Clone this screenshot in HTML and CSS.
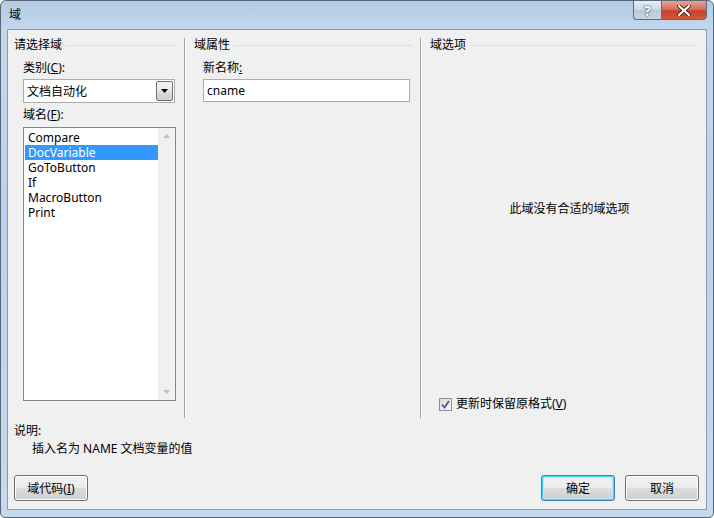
FILE: index.html
```html
<!DOCTYPE html>
<html lang="zh-CN">
<head>
    <meta charset="UTF-8">
    <title>域</title>
    <link rel="stylesheet" href="styles.css">
</head>
<body>
    <div class="window">
        <div class="titlebar">
            <span class="title">域</span>
            <div class="caption-buttons">
                <div class="cap-btn help">?</div>
                <div class="cap-btn close">
                    <svg width="14" height="11" viewBox="0 0 14 11">
                        <path d="M2 1 L12 10 M12 1 L2 10" stroke="#4a2020" stroke-width="4" stroke-linecap="round"/>
                        <path d="M2 1 L12 10 M12 1 L2 10" stroke="#fff" stroke-width="2.2" stroke-linecap="round"/>
                    </svg>
                </div>
            </div>
        </div>

        <div class="client">
            <div class="panels">
                <!-- left: choose field -->
                <div class="col col-left">
                    <div class="group-head"><span>请选择域</span><i></i></div>
                    <div class="col-body">
                        <div class="label first">类别(<u>C</u>):</div>
                        <div class="combo">
                            <span>文档自动化</span>
                            <div class="combo-btn">
                                <svg width="7" height="4" viewBox="0 0 7 4"><path d="M0 0 H7 L3.5 4 Z" fill="#000"/></svg>
                            </div>
                        </div>
                        <div class="label">域名(<u>F</u>):</div>
                        <div class="listbox">
                            <ul class="items">
                                <li>Compare</li>
                                <li class="selected">DocVariable</li>
                                <li>GoToButton</li>
                                <li>If</li>
                                <li>MacroButton</li>
                                <li>Print</li>
                            </ul>
                            <div class="scrollbar">
                                <svg width="7" height="4" viewBox="0 0 7 4"><path d="M0 4 H7 L3.5 0 Z" fill="#c0c0c0"/></svg>
                                <svg width="7" height="4" viewBox="0 0 7 4"><path d="M0 0 H7 L3.5 4 Z" fill="#c0c0c0"/></svg>
                            </div>
                        </div>
                    </div>
                </div>

                <!-- middle: field properties -->
                <div class="col col-mid">
                    <div class="group-head"><span>域属性</span><i></i></div>
                    <div class="col-body">
                        <div class="label first">新名称<u>:</u></div>
                        <div class="textbox">cname</div>
                    </div>
                </div>

                <!-- right: field options -->
                <div class="col col-right">
                    <div class="group-head"><span>域选项</span><i></i></div>
                    <div class="col-body">
                        <div class="no-options">此域没有合适的域选项</div>
                        <div class="check-row">
                            <span class="checkbox">
                                <svg width="9" height="9" viewBox="0 0 9 9"><path d="M1 4.5 L3.5 7.5 L8 1" stroke="#4a5a94" stroke-width="1.8" fill="none"/></svg>
                            </span>
                            <span>更新时保留原格式(<u>V</u>)</span>
                        </div>
                    </div>
                </div>
            </div>

            <div class="desc-title">说明:</div>
            <div class="desc">插入名为 NAME 文档变量的值</div>

            <div class="button-row">
                <div class="btn">域代码(<u>I</u>)</div>
                <div class="spacer"></div>
                <div class="btn default">确定</div>
                <div class="btn">取消</div>
            </div>
        </div>
    </div>
</body>
</html>
```

FILE: styles.css
```css
html, body {
    margin: 0;
    padding: 0;
}
body {
    width: 714px;
    height: 518px;
    overflow: hidden;
    font-family: "Noto Sans", "Noto Sans CJK SC", sans-serif;
    font-size: 12px;
    color: #000;
    background: #fff;
}
.window {
    box-sizing: border-box;
    width: 714px;
    height: 518px;
    border: 1px solid #5a6672;
    border-radius: 6px 6px 5px 5px;
    background: linear-gradient(180deg, #b4cbe4 0%, #c4d8ee 6%, #bcd2ea 40%, #c6daef 100%);
    padding: 0 6px 7px 6px;
    display: flex;
    flex-direction: column;
}
.titlebar {
    height: 28px;
    display: flex;
    align-items: flex-start;
}
.title {
    margin: 6px 0 0 2px;
    line-height: 16px;
}
.caption-buttons {
    margin-left: auto;
    display: flex;
}
.cap-btn {
    box-sizing: border-box;
    height: 20px;
    margin-top: -1px;
    border: 1px solid #5c6b7c;
    display: flex;
    align-items: center;
    justify-content: center;
}
.help {
    width: 28px;
    border-radius: 0 0 0 4px;
    border-right: none;
    background: linear-gradient(180deg, #e6edf5 0%, #ccd8e5 50%, #b9c8d8 51%, #c8d6e4 100%);
    color: #fff;
    font-weight: bold;
    font-size: 14px;
    text-shadow: 0 0 2px #324456, 0 0 1px #324456;
}
.close {
    width: 46px;
    border-radius: 0 0 4px 0;
    background: linear-gradient(180deg, #e8a493 0%, #d6705c 45%, #c4412b 55%, #d05a3f 100%);
}
.client {
    flex: 1;
    background: #f0f0f0;
    border: 1px solid #8a9bb0;
    display: flex;
    flex-direction: column;
}
.panels {
    display: flex;
    height: 380px;
    padding-top: 8px;
}
.col {
    display: flex;
    flex-direction: column;
}
.col-left {
    width: 176px;
    border-right: 1px solid #a0a0a0;
}
.col-mid {
    width: 234px;
    border-left: 1px solid #fff;
    border-right: 1px solid #a0a0a0;
}
.col-right {
    flex: 1;
    border-left: 1px solid #fff;
}
.group-head {
    display: flex;
    align-items: center;
    height: 14px;
    line-height: 14px;
    padding-left: 6px;
    padding-right: 8px;
}
.col-mid .group-head,
.col-right .group-head {
    padding-left: 8px;
}
.group-head i {
    flex: 1;
    height: 1px;
    margin-left: 4px;
    background: #d5dfe5;
}
.col-body {
    display: flex;
    flex-direction: column;
    padding-left: 15px;
}
.col-mid .col-body,
.col-right .col-body {
    padding-left: 17px;
}
.label {
    line-height: 14px;
    margin-top: 5px;
    margin-bottom: 5px;
}
.label.first {
    margin-top: 9px;
    margin-bottom: 4px;
}
.combo {
    box-sizing: border-box;
    width: 152px;
    height: 24px;
    border: 1px solid #abadb3;
    background: #fff;
    display: flex;
    align-items: center;
    padding-left: 3px;
}
.combo span {
    flex: 1;
}
.combo-btn {
    box-sizing: border-box;
    width: 17px;
    height: 20px;
    margin-right: 1px;
    border: 1px solid #707070;
    border-radius: 2px;
    background: linear-gradient(180deg, #f2f2f2 0%, #ebebeb 50%, #dddddd 51%, #cfcfcf 100%);
    display: flex;
    align-items: center;
    justify-content: center;
}
.listbox {
    box-sizing: border-box;
    width: 153px;
    height: 274px;
    border: 1px solid #828790;
    background: #fff;
    display: flex;
}
.items {
    flex: 1;
    list-style: none;
    margin: 2px 0 0 0;
    padding: 0;
}
.items li {
    line-height: 15px;
    height: 15px;
    padding-left: 3px;
    margin-left: 1px;
    overflow: hidden;
}
.items li.selected {
    background: #3399ff;
    color: #fff;
}
.scrollbar {
    width: 17px;
    background: #f0f0f0;
    display: flex;
    flex-direction: column;
    justify-content: space-between;
    align-items: center;
    padding: 6px 0 6px 0;
}
.textbox {
    box-sizing: border-box;
    width: 207px;
    height: 23px;
    border: 1px solid #abadb3;
    background: #fff;
    line-height: 21px;
    padding-left: 3px;
}
.no-options {
    margin-top: 150px;
    margin-left: -6px;
    text-align: center;
    line-height: 14px;
}
.check-row {
    margin-top: 181px;
    display: flex;
    align-items: center;
    line-height: 14px;
}
.checkbox {
    box-sizing: border-box;
    width: 13px;
    height: 13px;
    border: 1px solid #8f8f8f;
    background: linear-gradient(135deg, #dcdcdc 0%, #f6f6f6 100%);
    display: flex;
    align-items: center;
    justify-content: center;
    margin-right: 4px;
}
.desc-title {
    margin: 6px 0 0 6px;
    line-height: 14px;
}
.desc {
    margin: 4px 0 0 24px;
    line-height: 14px;
}
.button-row {
    display: flex;
    padding: 19px 7px 0 6px;
}
.spacer {
    flex: 1;
}
.btn {
    box-sizing: border-box;
    width: 74px;
    height: 26px;
    border: 1px solid #707070;
    border-radius: 3px;
    background: linear-gradient(180deg, #f2f2f2 0%, #ebebeb 50%, #dddddd 51%, #cfcfcf 100%);
    box-shadow: inset 0 0 0 1px #fcfcfc;
    display: flex;
    align-items: center;
    justify-content: center;
}
.btn.default {
    border-color: #3c7fb1;
    box-shadow: inset 0 0 0 1px #48d8fb, inset 0 0 0 2px #b8e6f8;
    margin-right: 10px;
}
```
